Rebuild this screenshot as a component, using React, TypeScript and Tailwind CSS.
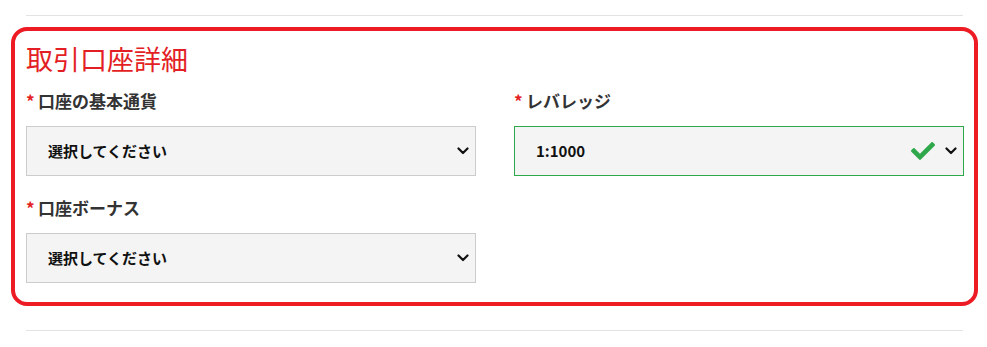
import { FaCheck } from "react-icons/fa";

function Chevron() {
  return (
    <svg width="12" height="8" viewBox="0 0 12 8" className="shrink-0">
      <path d="M1.5 1.5l4.5 4.5 4.5-4.5" fill="none" stroke="#111" strokeWidth="2.2" strokeLinecap="round" strokeLinejoin="round" />
    </svg>
  );
}

function Field({ label, value, valid }: { label: string; value: string; valid?: boolean }) {
  return (
    <div className="flex flex-col">
      <div className="flex items-center h-[24px] text-[17px] leading-[24px] font-bold text-[#333]">
        <span className="text-[#e31e24] w-[12px]">*</span>
        <span>{label}</span>
      </div>
      <div
        className={
          valid
            ? "mt-[13px] h-[50px] flex items-center pl-[21px] pr-[6px] bg-[#f4f4f4] border border-[#2ea84a]"
            : "mt-[13px] h-[50px] flex items-center pl-[21px] pr-[6px] bg-[#f4f4f4] border border-[#cccccc]"
        }
      >
        <span className="flex-1 text-[15px] font-bold text-[#111]">{value}</span>
        {valid && <FaCheck className="text-[#2ea84a] mr-[10px]" size={24} />}
        <Chevron />
      </div>
    </div>
  );
}

export default function App() {
  return (
    <div
      className="w-[987px] h-[347px] bg-white pl-[11px] pr-[9px] pt-[15px]"
      style={{ fontFamily: '"Noto Sans CJK JP", "Noto Sans", sans-serif' }}
    >
      <div className="mx-[15px] h-px bg-[#e2e2e2]"></div>

      {/* 取引口座詳細 */}
      <div className="mt-[11px] border-4 border-[#ed1c24] rounded-[16px] pl-[11px] pr-[10px] pt-[12px] pb-[19px]">
        <h2 className="text-[27px] leading-[32px] font-normal text-[#e31e24]">取引口座詳細</h2>
        <div className="mt-[14px] grid grid-cols-2 gap-x-[38px] gap-y-[20px] items-start">
          <Field label="口座の基本通貨" value="選択してください" />
          <Field label="レバレッジ" value="1:1000" valid />
          <Field label="口座ボーナス" value="選択してください" />
        </div>
      </div>

      <div className="mt-[24px] mx-[15px] h-px bg-[#e2e2e2]"></div>
    </div>
  );
}
